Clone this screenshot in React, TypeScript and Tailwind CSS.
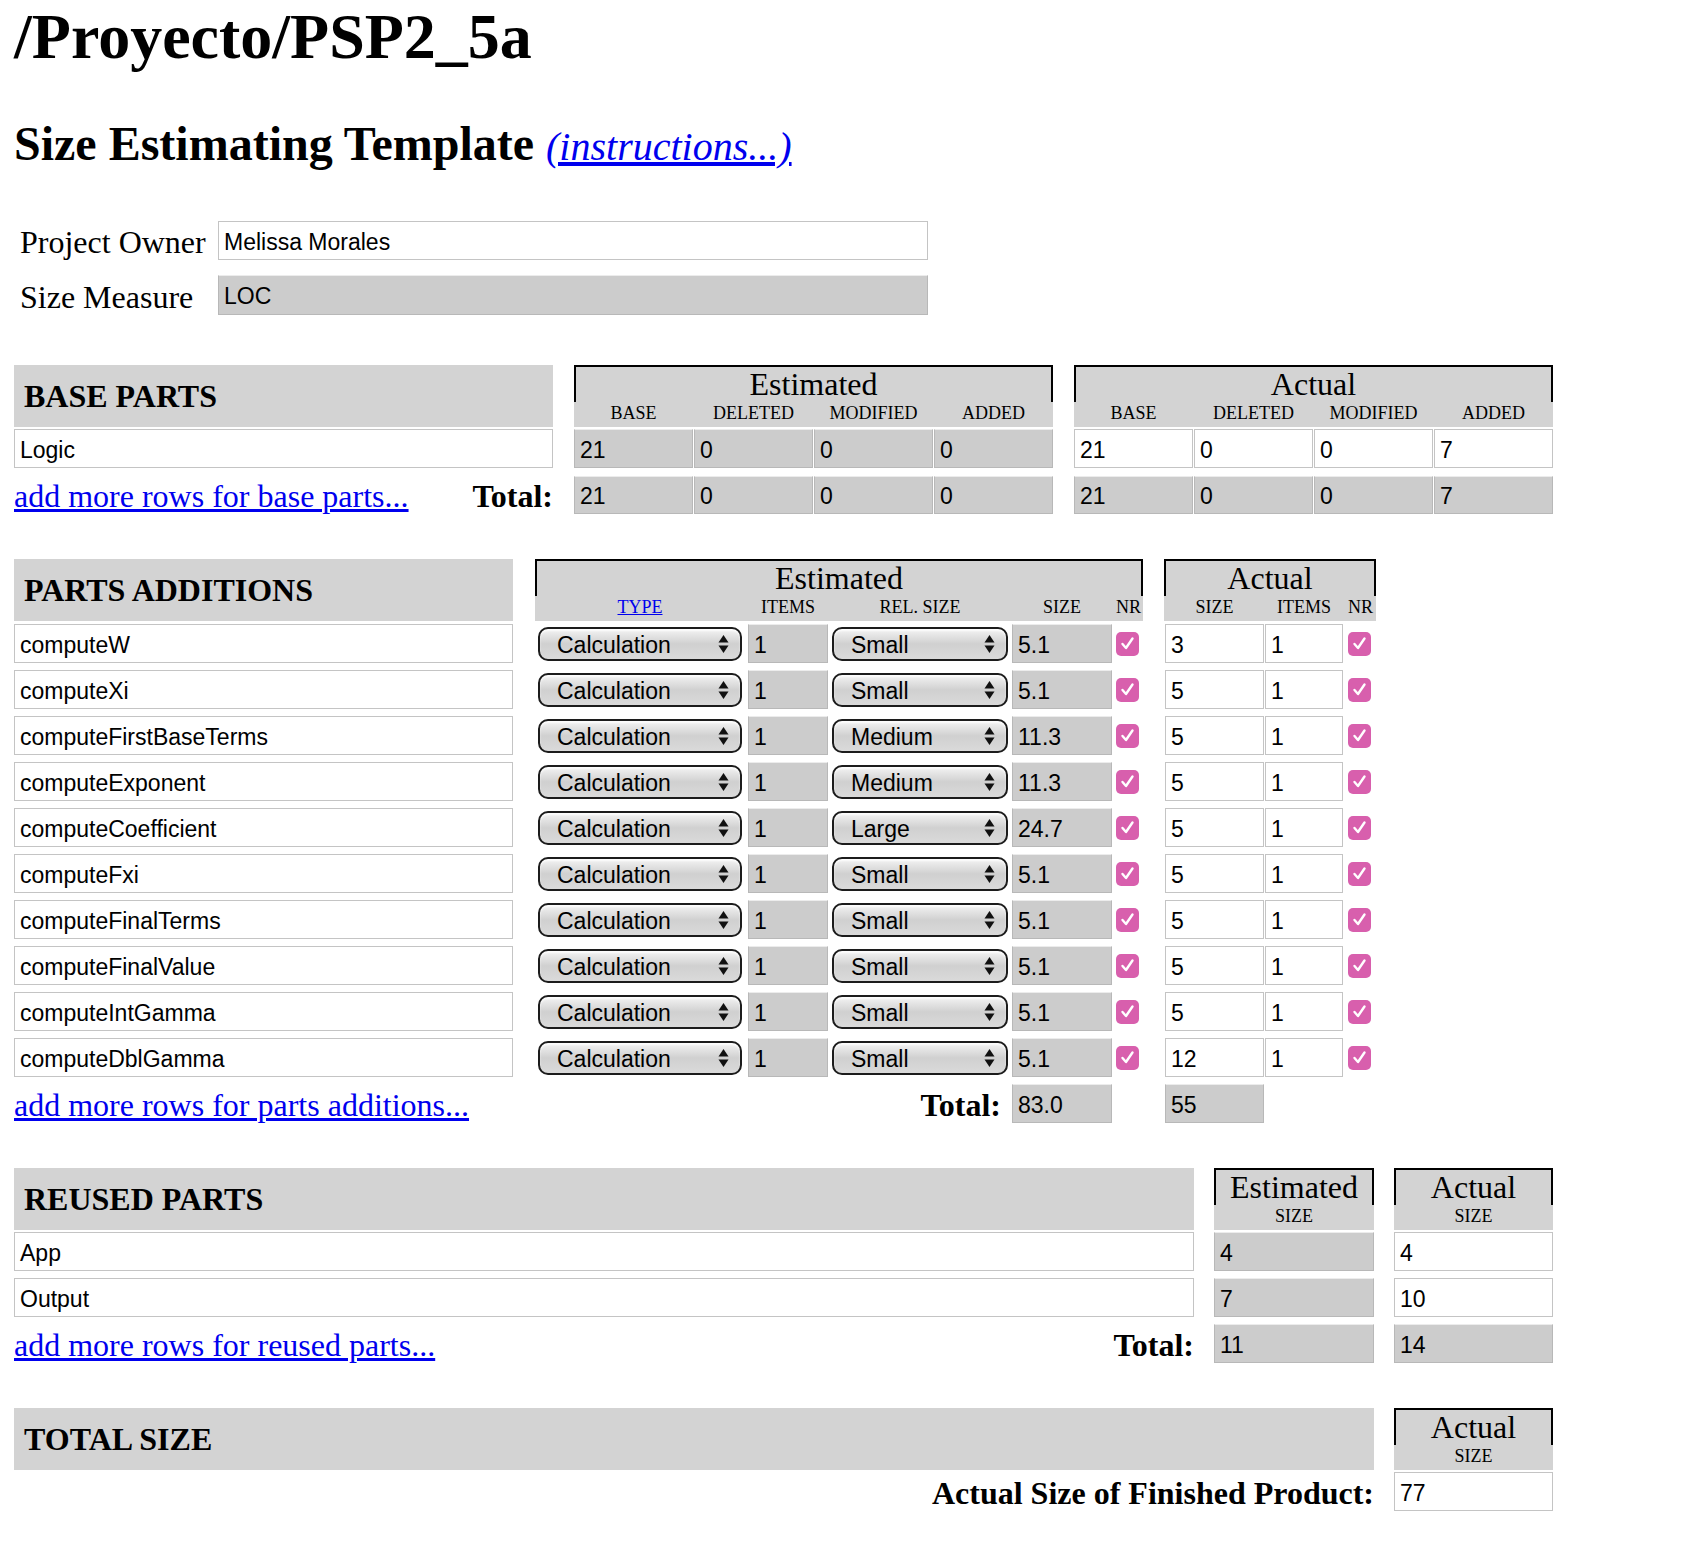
import React from "react";

const SANS = "font-['Liberation_Sans',Arial,Helvetica,sans-serif]";

function Inp({ children, gray, className = "" }: { children?: React.ReactNode; gray?: boolean; className?: string }) {
  return (
    <div
      className={`h-full flex items-center pl-[5px] pt-[3px] text-[23px] text-black whitespace-nowrap overflow-hidden ${SANS} border ${
        gray ? "bg-[#cccccc] border-[#b8b8b8] border-t-[#ececec]" : "bg-white border-[#c4c4c4]"
      } ${className}`}
    >
      {children}
    </div>
  );
}

function Sel({ children, className = "" }: { children: React.ReactNode; className?: string }) {
  return (
    <div
      className={`relative h-[34px] rounded-[10px] border-2 border-[#1c1c1c] bg-linear-to-b from-[#f4f4f4] via-[#d0d0d0] to-[#dadada] flex items-center pl-[17px] pt-[3px] text-[23px] text-black ${SANS} shadow-[inset_0_2px_2px_rgba(255,255,255,0.8)] ${className}`}
    >
      {children}
      <svg className="absolute right-[11px] top-1/2 -translate-y-1/2" width="11" height="20" viewBox="0 0 11 20">
        <path d="M5.5 1 L10.5 8.5 H0.5 Z" fill="#111" />
        <path d="M5.5 19 L10.5 11.5 H0.5 Z" fill="#111" />
      </svg>
    </div>
  );
}

function Check() {
  return (
    <div className="w-[23px] h-[24px] rounded-[5px] bg-[#d85fad] flex items-center justify-center">
      <svg width="15" height="15" viewBox="0 0 15 15">
        <path d="M2.5 8 L6 12 L12.5 2.5" fill="none" stroke="white" strokeWidth="2.4" strokeLinecap="round" strokeLinejoin="round" />
      </svg>
    </div>
  );
}

function GroupHead({ title, className = "", children }: { title: string; className?: string; children?: React.ReactNode }) {
  return (
    <div className={`h-[62px] bg-[#d3d3d3] flex flex-col ${className}`}>
      <div className="h-[37px] border-t-2 border-x-2 border-black text-center text-[32px] leading-[32px] pt-[1px]">{title}</div>
      <div className="text-[18px] leading-[22px]">{children}</div>
    </div>
  );
}

function SectionHead({ title, className = "" }: { title: string; className?: string }) {
  return (
    <div className={`h-[62px] bg-[#d3d3d3] flex items-center pl-[10px] text-[32px] leading-[32px] font-bold ${className}`}>{title}</div>
  );
}

function Link({ children }: { children: React.ReactNode }) {
  return <a className="text-[#0000ee] underline text-[32px] leading-[32px] cursor-pointer">{children}</a>;
}

const baseLabels = ["BASE", "DELETED", "MODIFIED", "ADDED"];

function FourCells({ vals, gray }: { vals: string[]; gray: boolean }) {
  return (
    <div className="flex gap-[1px] h-full">
      {vals.map((v, i) => (
        <Inp key={i} gray={gray} className="w-[119px]">
          {v}
        </Inp>
      ))}
    </div>
  );
}

const parts = [
  ["computeW", "Small", "5.1", "3"],
  ["computeXi", "Small", "5.1", "5"],
  ["computeFirstBaseTerms", "Medium", "11.3", "5"],
  ["computeExponent", "Medium", "11.3", "5"],
  ["computeCoefficient", "Large", "24.7", "5"],
  ["computeFxi", "Small", "5.1", "5"],
  ["computeFinalTerms", "Small", "5.1", "5"],
  ["computeFinalValue", "Small", "5.1", "5"],
  ["computeIntGamma", "Small", "5.1", "5"],
  ["computeDblGamma", "Small", "5.1", "12"],
];

export default function App() {
  return (
    <div className="min-h-[1558px] bg-white text-black pl-[14px] pt-[5px] font-['Liberation_Serif','Times_New_Roman',serif]">
      <h1 className="text-[64px] leading-[64px] font-bold">/Proyecto/PSP2_5a</h1>
      <h2 className="mt-[51px] text-[48px] leading-[48px] font-bold whitespace-nowrap">
        Size Estimating Template{" "}
        <a className="text-[40px] italic font-normal text-[#0000ee] underline cursor-pointer">(instructions...)</a>
      </h2>

      {/* Owner / Size measure */}
      <div className="mt-[50px] flex items-center h-[39px]">
        <div className="w-[204px] pl-[6px] pt-[3px] text-[32px] leading-[32px]">Project Owner</div>
        <Inp className="w-[710px]">Melissa Morales</Inp>
      </div>
      <div className="mt-[15px] flex items-center h-[40px]">
        <div className="w-[204px] pl-[6px] pt-[3px] text-[32px] leading-[32px]">Size Measure</div>
        <Inp gray className="w-[710px]">LOC</Inp>
      </div>

      {/* BASE PARTS */}
      <div className="mt-[50px] flex">
        <SectionHead title="BASE PARTS" className="w-[539px]" />
        <GroupHead title="Estimated" className="ml-[21px] w-[479px]">
          <div className="flex gap-[1px]">
            {baseLabels.map((l) => (
              <div key={l} className="w-[119px] text-center">{l}</div>
            ))}
          </div>
        </GroupHead>
        <GroupHead title="Actual" className="ml-[21px] w-[479px]">
          <div className="flex gap-[1px]">
            {baseLabels.map((l) => (
              <div key={l} className="w-[119px] text-center">{l}</div>
            ))}
          </div>
        </GroupHead>
      </div>
      <div className="mt-[2px] flex h-[39px]">
        <Inp className="w-[539px]">Logic</Inp>
        <div className="ml-[21px]">
          <FourCells vals={["21", "0", "0", "0"]} gray />
        </div>
        <div className="ml-[21px]">
          <FourCells vals={["21", "0", "0", "7"]} gray={false} />
        </div>
      </div>
      <div className="mt-[8px] flex h-[38px]">
        <div className="w-[539px] flex items-center justify-between whitespace-nowrap pt-[2px]">
          <Link>add more rows for base parts...</Link>
          <span className="text-[32px] leading-[32px] font-bold">Total:</span>
        </div>
        <div className="ml-[21px]">
          <FourCells vals={["21", "0", "0", "0"]} gray />
        </div>
        <div className="ml-[21px]">
          <FourCells vals={["21", "0", "0", "7"]} gray />
        </div>
      </div>

      {/* PARTS ADDITIONS */}
      <div className="mt-[45px] flex">
        <SectionHead title="PARTS ADDITIONS" className="w-[499px]" />
        <GroupHead title="Estimated" className="ml-[22px] w-[608px]">
          <div className="flex pl-[1px]">
            <div className="w-[204px] ml-[2px] text-center">
              <a className="text-[#0000ee] underline">TYPE</a>
            </div>
            <div className="w-[80px] ml-[6px] text-center">ITEMS</div>
            <div className="w-[176px] ml-[4px] text-center">REL. SIZE</div>
            <div className="w-[100px] ml-[4px] text-center">SIZE</div>
            <div className="w-[23px] ml-[4px] text-center">NR</div>
          </div>
        </GroupHead>
        <GroupHead title="Actual" className="ml-[21px] w-[212px]">
          <div className="flex pl-[1px]">
            <div className="w-[99px] text-center">SIZE</div>
            <div className="w-[78px] ml-[1px] text-center">ITEMS</div>
            <div className="w-[23px] ml-[5px] text-center">NR</div>
          </div>
        </GroupHead>
      </div>
      <div className="mt-[3px] flex flex-col gap-[7px]">
        {parts.map(([name, rel, size, act]) => (
          <div key={name} className="flex h-[39px] items-center">
            <Inp className="w-[499px]">{name}</Inp>
            <div className="ml-[22px] w-[608px] h-full flex items-center pl-[3px]">
              <Sel className="w-[204px]">Calculation</Sel>
              <Inp gray className="w-[80px] ml-[6px]">1</Inp>
              <Sel className="w-[176px] ml-[4px]">{rel}</Sel>
              <Inp gray className="w-[100px] ml-[4px]">{size}</Inp>
              <div className="ml-[4px]">
                <Check />
              </div>
            </div>
            <div className="ml-[21px] w-[212px] h-full flex items-center pl-[1px]">
              <Inp className="w-[99px]">{act}</Inp>
              <Inp className="w-[78px] ml-[1px]">1</Inp>
              <div className="ml-[5px]">
                <Check />
              </div>
            </div>
          </div>
        ))}
      </div>
      <div className="mt-[7px] flex h-[39px]">
        <div className="w-[998px] flex items-center justify-between pr-[11px] whitespace-nowrap pt-[2px]">
          <Link>add more rows for parts additions...</Link>
          <span className="text-[32px] leading-[32px] font-bold">Total:</span>
        </div>
        <Inp gray className="w-[100px]">83.0</Inp>
        <Inp gray className="w-[99px] ml-[53px]">55</Inp>
      </div>

      {/* REUSED PARTS */}
      <div className="mt-[45px] flex">
        <SectionHead title="REUSED PARTS" className="w-[1180px]" />
        <GroupHead title="Estimated" className="ml-[20px] w-[160px]">
          <div className="text-center">SIZE</div>
        </GroupHead>
        <GroupHead title="Actual" className="ml-[20px] w-[159px]">
          <div className="text-center">SIZE</div>
        </GroupHead>
      </div>
      <div className="mt-[2px] flex h-[39px]">
        <Inp className="w-[1180px]">App</Inp>
        <Inp gray className="w-[160px] ml-[20px]">4</Inp>
        <Inp className="w-[159px] ml-[20px]">4</Inp>
      </div>
      <div className="mt-[7px] flex h-[39px]">
        <Inp className="w-[1180px]">Output</Inp>
        <Inp gray className="w-[160px] ml-[20px]">7</Inp>
        <Inp className="w-[159px] ml-[20px]">10</Inp>
      </div>
      <div className="mt-[7px] flex h-[39px]">
        <div className="w-[1180px] flex items-center justify-between whitespace-nowrap pt-[2px]">
          <Link>add more rows for reused parts...</Link>
          <span className="text-[32px] leading-[32px] font-bold">Total:</span>
        </div>
        <Inp gray className="w-[160px] ml-[20px]">11</Inp>
        <Inp gray className="w-[159px] ml-[20px]">14</Inp>
      </div>

      {/* TOTAL SIZE */}
      <div className="mt-[45px] flex">
        <SectionHead title="TOTAL SIZE" className="w-[1360px]" />
        <GroupHead title="Actual" className="ml-[20px] w-[159px]">
          <div className="text-center">SIZE</div>
        </GroupHead>
      </div>
      <div className="mt-[2px] flex h-[39px]">
        <div className="w-[1360px] flex items-center justify-end whitespace-nowrap pt-[2px]">
          <span className="text-[32px] leading-[32px] font-bold">Actual Size of Finished Product:</span>
        </div>
        <Inp className="w-[159px] ml-[20px]">77</Inp>
      </div>
    </div>
  );
}
